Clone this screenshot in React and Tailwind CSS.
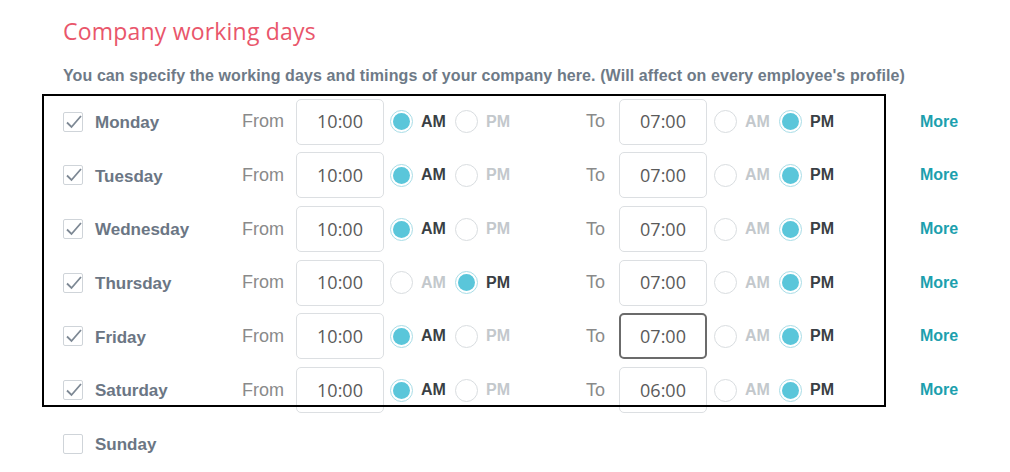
// App.jsx
const days = [
  { name: "Monday", from: "10:00", fromPm: false, to: "07:00", toPm: true },
  { name: "Tuesday", from: "10:00", fromPm: false, to: "07:00", toPm: true },
  { name: "Wednesday", from: "10:00", fromPm: false, to: "07:00", toPm: true },
  { name: "Thursday", from: "10:00", fromPm: true, to: "07:00", toPm: true },
  { name: "Friday", from: "10:00", fromPm: false, to: "07:00", toPm: true, focus: true },
  { name: "Saturday", from: "10:00", fromPm: false, to: "06:00", toPm: true },
];

function Checkbox({ checked }) {
  return (
    <span className="relative flex h-[20px] w-[20px] items-center justify-center rounded-[2px] border border-[#cfd4d9] bg-white">
      {checked && (
        <svg viewBox="0 0 20 20" className="absolute h-[20px] w-[20px]">
          <path d="M4 10.5 L8.5 15 L18 4" fill="none" stroke="#7d8894" strokeWidth="1.8" />
        </svg>
      )}
    </span>
  );
}

function Radio({ on, label }) {
  return (
    <span className="flex items-center">
      {on ? (
        <span className="flex h-[23px] w-[23px] items-center justify-center rounded-full border border-[#a9dde7] bg-white">
          <span className="h-[17px] w-[17px] rounded-full bg-[#5ac6da]" />
        </span>
      ) : (
        <span className="h-[23px] w-[23px] rounded-full border border-[#d9dde0] bg-white" />
      )}
      <span
        className={
          "ml-[8px] w-[26px] text-[16px] font-bold " + (on ? "text-[#3a3f44]" : "text-[#c3c8cc]")
        }
      >
        {label}
      </span>
    </span>
  );
}

function AmPm({ pm }) {
  return (
    <div className="flex items-center gap-[8px]">
      <Radio on={!pm} label="AM" />
      <Radio on={pm} label="PM" />
    </div>
  );
}

function TimeBox({ value, focus }) {
  return (
    <div
      className={
        "flex h-[46px] w-[88px] items-center justify-center rounded-[5px] bg-white text-[18px] text-[#5a5a5a] font-['Open_Sans',sans-serif] " +
        (focus ? "border-2 border-[#6b6b6b]" : "border border-[#dcdfe2]")
      }
    >
      {value}
    </div>
  );
}

export default function App() {
  return (
    <div className="relative h-[472px] w-[1010px] overflow-hidden bg-white pl-[63px] font-['Liberation_Sans',Arial,sans-serif]">
      <h1 className="pt-[17px] text-[23px] leading-[28px] font-normal tracking-[0.2px] text-[#e9566b] font-['Open_Sans',sans-serif]">
        Company working days
      </h1>
      <p className="mt-[21px] text-[16px] leading-[19px] font-bold tracking-[0.1px] text-[#6e7a87]">
        You can specify the working days and timings of your company here. (Will affect on every employee's profile)
      </p>

      <div className="mt-[10px]">
        {days.map((d) => (
          <div key={d.name} className="flex h-[53.67px] items-center">
            <div className="flex w-[179px] items-center gap-[12px]">
              <Checkbox checked />
              <span className="pt-[2px] text-[17px] font-bold text-[#6b7684]">{d.name}</span>
            </div>
            <span className="w-[54px] text-[18px] text-[#8a8a8a]">From</span>
            <TimeBox value={d.from} />
            <div className="w-[202px] pl-[6px]">
              <AmPm pm={d.fromPm} />
            </div>
            <span className="w-[33px] text-[18px] text-[#8a8a8a]">To</span>
            <TimeBox value={d.to} focus={d.focus} />
            <div className="w-[213px] pl-[7px]">
              <AmPm pm={d.toPm} />
            </div>
            <span className="text-[16px] font-bold text-[#1c9fae]">More</span>
          </div>
        ))}
        <div className="flex h-[53.67px] items-center">
          <div className="flex w-[179px] items-center gap-[12px]">
            <Checkbox checked={false} />
            <span className="pt-[2px] text-[17px] font-bold text-[#6b7684]">Sunday</span>
          </div>
        </div>
      </div>

      <div className="pointer-events-none absolute left-[42px] top-[94px] h-[313px] w-[844px] border-2 border-black" />
    </div>
  );
}
